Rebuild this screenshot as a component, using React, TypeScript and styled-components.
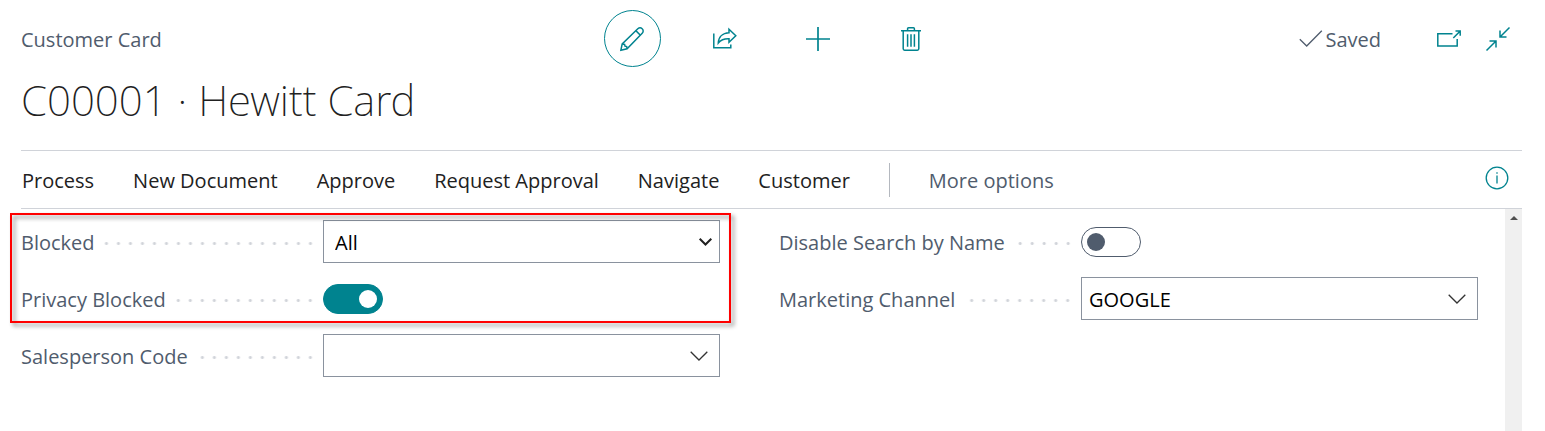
import React, { useState } from "react";
import styled, { createGlobalStyle } from "styled-components";

const teal = "#00838f";
const slate = "#505c6d";
const ink = "#212121";
const rule = "#d0d3d9";

const GlobalStyle = createGlobalStyle`
  *, *::before, *::after { box-sizing: border-box; }
  body {
    margin: 0;
    background: #fff;
    color: ${ink};
    font-family: "Open Sans", "Noto Sans", sans-serif;
    font-size: 20px;
    line-height: 28px;
  }
  button, input, select { font: inherit; color: inherit; }
`;

const Page = styled.div`
  display: flex;
  flex-direction: column;
  min-height: 100vh;
  padding: 10px 23px 0 21px;
`;

const Header = styled.header`
  display: grid;
  grid-template-columns: 1fr auto 1fr;
  align-items: center;
`;

const Caption = styled.span`
  padding-top: 2px;
  color: ${slate};
`;

const Tools = styled.div`
  display: flex;
  gap: 36px;
`;

const ToolButton = styled.button<{ $ringed?: boolean }>`
  display: grid;
  place-items: center;
  width: 57px;
  height: 57px;
  padding: 0;
  border: 1px solid ${(p) => (p.$ringed ? teal : "transparent")};
  border-radius: 50%;
  background: none;
  color: ${teal};
  cursor: pointer;
`;

const Status = styled.div`
  display: flex;
  align-items: center;
  justify-content: flex-end;
  gap: 25px;
  padding-right: 12px;
`;

const Saved = styled.span`
  display: flex;
  align-items: center;
  gap: 2px;
  margin-right: 31px;
  padding-top: 2px;
  color: ${slate};
`;

const IconButton = styled.button`
  display: grid;
  place-items: center;
  padding: 0;
  border: 0;
  background: none;
  color: ${teal};
  cursor: pointer;
`;

const Icon = styled.svg`
  display: block;
  fill: none;
  stroke: currentColor;
  overflow: visible;
`;

const Title = styled.h1`
  margin: 3px 0 20px;
  font-family: "Noto Sans", "Open Sans", sans-serif;
  font-size: 42px;
  font-weight: 200;
  line-height: 60px;
`;

const ActionBar = styled.nav`
  display: flex;
  align-items: center;
  gap: 39px;
  height: 59px;
  padding: 0 13px 0 1px;
  border-top: 1px solid ${rule};
  border-bottom: 1px solid ${rule};
`;

const Action = styled.button<{ $muted?: boolean }>`
  padding: 2px 0 0;
  border: 0;
  background: none;
  color: ${(p) => (p.$muted ? slate : ink)};
  white-space: nowrap;
  cursor: pointer;
`;

const Divider = styled.span`
  width: 1px;
  height: 34px;
  background: #b4b8bf;
`;

const InfoSlot = styled.div`
  margin-left: auto;
  padding-bottom: 3px;
`;

const Body = styled.main`
  display: flex;
  flex: 1;
`;

const Form = styled.form`
  display: grid;
  flex: 1;
  grid-template-columns: 1fr 1fr;
  column-gap: 59px;
  align-items: start;
  padding: 11px 27px 0 0;
`;

const Column = styled.div`
  display: grid;
  gap: 14px;
`;

const Highlight = styled.div`
  position: relative;
  display: grid;
  gap: 14px;

  &::after {
    content: "";
    position: absolute;
    inset: -7px -11px -3px;
    border: 2px solid #f00;
    filter: drop-shadow(3px 3px 2px rgba(0, 0, 0, 0.45));
    pointer-events: none;
  }
`;

const Row = styled.div`
  display: grid;
  grid-template-columns: 302px 1fr;
  align-items: center;
  height: 43px;
`;

const LabelCell = styled.div`
  display: flex;
  align-items: center;
  padding: 3px 7px 0 0;
`;

const Label = styled.label`
  color: ${slate};
  white-space: nowrap;
`;

const Dots = styled.span`
  flex: 1;
  height: 4px;
  margin-left: 8px;
  background: radial-gradient(circle, #d0d3d9 1px, #d0d3d900 2px) right center / 12px 3px repeat-x;
`;

const Box = styled.div`
  position: relative;
  display: flex;
  height: 43px;
  border: 1px solid #8a929e;
`;

const Select = styled.select`
  flex: 1;
  padding: 3px 40px 0 11px;
  border: 0;
  background: none;
  color: #000;
  appearance: none;
`;

const SelectArrow = styled(Icon)`
  position: absolute;
  top: 17px;
  right: 7px;
  pointer-events: none;
`;

const Input = styled.input`
  flex: 1;
  min-width: 0;
  padding: 3px 7px 0;
  border: 0;
  background: none;
  color: #000;
`;

const LookupButton = styled(IconButton)`
  width: 41px;
  color: #333;
`;

const Toggle = styled.input`
  display: flex;
  align-items: center;
  width: 60px;
  height: 30px;
  margin: 0;
  padding: 0 5px;
  border: 1px solid ${slate};
  border-radius: 15px;
  background: #fff;
  appearance: none;
  cursor: pointer;

  &::before {
    content: "";
    width: 18px;
    height: 18px;
    border-radius: 50%;
    background: ${slate};
  }

  &:checked {
    justify-content: flex-end;
    border-color: ${teal};
    background: ${teal};
  }

  &:checked::before { background: #fff; }
`;

const ScrollTrack = styled.div`
  display: flex;
  justify-content: center;
  width: 17px;
  padding-top: 7px;
  background: #f0f0f0;
`;

const actions = ["Process", "New Document", "Approve", "Request Approval", "Navigate", "Customer"];

function Field({ id, label, children }: { id: string; label: string; children: React.ReactNode }) {
  return (
    <Row>
      <LabelCell>
        <Label htmlFor={id}>{label}</Label>
        <Dots />
      </LabelCell>
      {children}
    </Row>
  );
}

function Lookup({ id, value }: { id: string; value: string }) {
  return (
    <Box>
      <Input id={id} type="text" defaultValue={value} />
      <LookupButton type="button" aria-label="Choose a value">
        <Icon width="18" height="10" strokeWidth="1.3">
          <path d="M.7 .7 9 9 17.3 .7" />
        </Icon>
      </LookupButton>
    </Box>
  );
}

function Switch({ id, initial }: { id: string; initial: boolean }) {
  const [on, setOn] = useState(initial);
  return <Toggle id={id} type="checkbox" role="switch" checked={on} onChange={() => setOn(!on)} />;
}

export default function App() {
  return (
    <>
      <GlobalStyle />
      <Page>
        <Header>
          <Caption>Customer Card</Caption>
          <Tools>
            <ToolButton $ringed aria-label="Edit">
              <Icon width="24" height="24" strokeWidth="1.5">
                <path d="M.9 23.2 2.2 16.9 17.8 1.8C19.2.5 21 .6 22.2 1.8 23.5 3 23.5 4.9 22.2 6.2L7.1 21.8Z" />
                <path d="M15.8 3.6 20.4 8.2M2.2 16.9 4.6 17.4 5 19.2 6.7 19.6 7.1 21.8" />
              </Icon>
            </ToolButton>
            <ToolButton aria-label="Share">
              <Icon width="24" height="22" strokeWidth="1.5">
                <path d="M.8 5.5V19.8H17.8V16.5" />
                <path d="M16 1.3 22.8 7.8 16 14.2V10.8C11.5 10.6 8 11.8 5.3 15 5.5 9.2 9.5 5.1 16 4.8Z" />
              </Icon>
            </ToolButton>
            <ToolButton aria-label="New">
              <Icon width="24" height="24" strokeWidth="1.7">
                <path d="M12 0V24M0 12H24" />
              </Icon>
            </ToolButton>
            <ToolButton aria-label="Delete">
              <Icon width="20" height="24" strokeWidth="1.5">
                <path d="M0 3.7H20M6.6 3.5V1.7Q6.6 .8 7.5 .8H12.5Q13.4 .8 13.4 1.7V3.5" />
                <path d="M2.2 3.7V21.8Q2.2 23.2 3.6 23.2H16.4Q17.8 23.2 17.8 21.8V3.7" />
                <path d="M6.6 7.3V19.7M10 7.3V19.7M13.4 7.3V19.7" />
              </Icon>
            </ToolButton>
          </Tools>
          <Status>
            <Saved>
              <Icon width="24" height="17" strokeWidth="1.3">
                <path d="M.8 8.3 7.7 15 22.8-.2" />
              </Icon>
              Saved
            </Saved>
            <IconButton aria-label="Open in new window">
              <Icon width="24" height="18" strokeWidth="1.5">
                <path d="M15.5 3.7H.8V16H20.2V9" />
                <path d="M16.3 8 23 1.3M18.5 1.1H23.2V5.8" />
              </Icon>
            </IconButton>
            <IconButton aria-label="Collapse">
              <Icon width="24" height="24" strokeWidth="1.5">
                <path d="M23.5 .5 14 10M14 3.5V10H20.5M.5 23.5 10 14M3.5 14H10V20.5" />
              </Icon>
            </IconButton>
          </Status>
        </Header>
        <Title>C00001 · Hewitt Card</Title>
        <ActionBar>
          {actions.map((name) => (
            <Action key={name}>{name}</Action>
          ))}
          <Divider />
          <Action $muted>More options</Action>
          <InfoSlot>
            <IconButton aria-label="Details">
              <Icon width="24" height="24" strokeWidth="1.3">
                <circle cx="12" cy="12" r="10.8" />
                <path d="M12 9.5V17.5M12 6.2V7.8" />
              </Icon>
            </IconButton>
          </InfoSlot>
        </ActionBar>
        <Body>
          <Form>
            <Column>
              <Highlight>
                <Field id="blocked" label="Blocked">
                  <Box>
                    <Select id="blocked" defaultValue="All">
                      <option>All</option>
                      <option>Ship</option>
                      <option>Invoice</option>
                    </Select>
                    <SelectArrow width="13" height="8" strokeWidth="2">
                      <path d="M.7 .7 6.5 6.5 12.3 .7" />
                    </SelectArrow>
                  </Box>
                </Field>
                <Field id="privacy" label="Privacy Blocked">
                  <Switch id="privacy" initial />
                </Field>
              </Highlight>
              <Field id="salesperson" label="Salesperson Code">
                <Lookup id="salesperson" value="" />
              </Field>
            </Column>
            <Column>
              <Field id="search" label="Disable Search by Name">
                <Switch id="search" initial={false} />
              </Field>
              <Field id="channel" label="Marketing Channel">
                <Lookup id="channel" value="GOOGLE" />
              </Field>
            </Column>
          </Form>
          <ScrollTrack>
            <Icon width="8" height="4">
              <path d="M0 4 4 0 8 4Z" fill="#505050" stroke="none" />
            </Icon>
          </ScrollTrack>
        </Body>
      </Page>
    </>
  );
}
